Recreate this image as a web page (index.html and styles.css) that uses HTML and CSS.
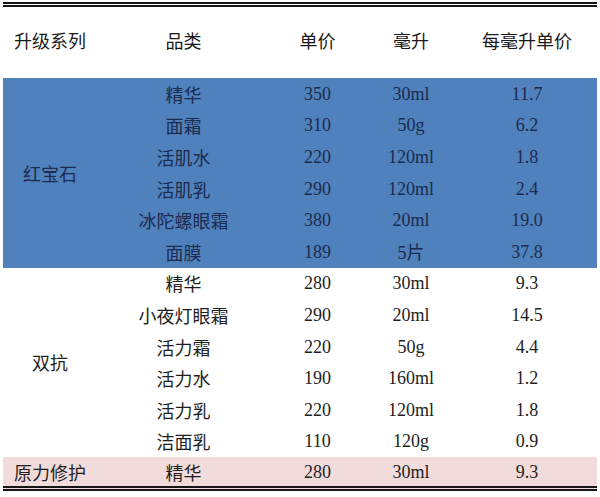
FILE: index.html
```html
<!DOCTYPE html>
<html lang="zh">
<head>
<meta charset="utf-8">
<title>升级系列价格表</title>
<link rel="stylesheet" href="styles.css">
</head>
<body>
<table class="price">
  <colgroup>
    <col class="c-series"><col class="c-item"><col class="c-price"><col class="c-vol"><col class="c-unit">
  </colgroup>
  <thead>
    <tr class="head">
      <th class="series">升级系列</th><th>品类</th><th>单价</th><th>毫升</th><th>每毫升单价</th>
    </tr>
  </thead>
  <tbody class="ruby">
    <tr><td class="series" rowspan="6">红宝石</td><td class="cjk">精华</td><td>350</td><td>30ml</td><td>11.7</td></tr>
    <tr><td class="cjk">面霜</td><td>310</td><td>50g</td><td>6.2</td></tr>
    <tr><td class="cjk">活肌水</td><td>220</td><td>120ml</td><td>1.8</td></tr>
    <tr><td class="cjk">活肌乳</td><td>290</td><td>120ml</td><td>2.4</td></tr>
    <tr><td class="cjk">冰陀螺眼霜</td><td>380</td><td>20ml</td><td>19.0</td></tr>
    <tr><td class="cjk">面膜</td><td>189</td><td>5<span class="cjk">片</span></td><td>37.8</td></tr>
  </tbody>
  <tbody class="dual">
    <tr><td class="series" rowspan="6">双抗</td><td class="cjk">精华</td><td>280</td><td>30ml</td><td>9.3</td></tr>
    <tr><td class="cjk">小夜灯眼霜</td><td>290</td><td>20ml</td><td>14.5</td></tr>
    <tr><td class="cjk">活力霜</td><td>220</td><td>50g</td><td>4.4</td></tr>
    <tr><td class="cjk">活力水</td><td>190</td><td>160ml</td><td>1.2</td></tr>
    <tr><td class="cjk">活力乳</td><td>220</td><td>120ml</td><td>1.8</td></tr>
    <tr><td class="cjk">洁面乳</td><td>110</td><td>120g</td><td>0.9</td></tr>
  </tbody>
  <tbody class="force">
    <tr><td class="series">原力修护</td><td class="cjk">精华</td><td>280</td><td>30ml</td><td>9.3</td></tr>
  </tbody>
</table>
</body>
</html>
```

FILE: styles.css
```css
html, body {
  margin: 0;
  padding: 0;
  background: #ffffff;
}

.price {
  margin: 2px 0 0 3px;
  width: 594px;
  table-layout: fixed;
  border-collapse: collapse;
  border-spacing: 0;
  border-top: 5px double #161616;
  border-bottom: 5px double #161616;
  font-family: "Liberation Serif", "Noto Sans CJK SC", serif;
  font-size: 18px;
  color: #1e1e1e;
}

.c-series { width: 94px; }
.c-item { width: 173px; }
.c-price { width: 95px; }
.c-vol { width: 92px; }
.c-unit { width: 140px; }

.price th,
.price td {
  padding: 0;
  text-align: center;
  vertical-align: middle;
  line-height: 1;
}

.price th,
.price .cjk,
.price .series {
  font-family: "Noto Sans CJK SC", sans-serif;
  font-weight: 400;
  font-size: 18px;
}

.head th {
  height: 66px;
  padding-bottom: 5px;
  font-weight: 400;
  color: #1a1a1a;
}

.price tbody tr {
  height: 31.6px;
}

.ruby td {
  background: #4f81bd;
  color: #1c2b4e;
}

.force td {
  background: #f2dcdb;
  color: #1e1e1e;
}
```
